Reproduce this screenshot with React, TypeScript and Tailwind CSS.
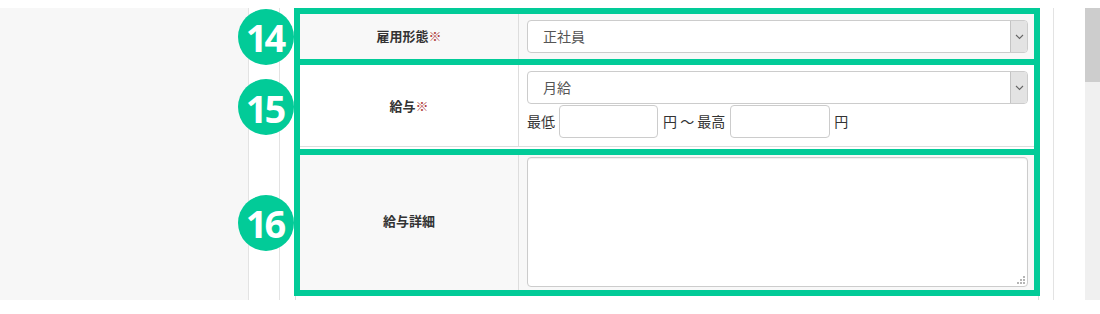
import React from "react";

const jp = { fontFamily: '"Noto Sans CJK JP", "Noto Sans", sans-serif' };

function Badge({ n }: { n: string }) {
  return (
    <div className="absolute left-[-62px] top-1/2 -translate-y-1/2 w-[56px] h-[56px] rounded-full bg-[#02cb98] flex items-center justify-center">
      <span
        className="text-white font-bold text-[38px] leading-none tracking-[-3px] pr-[3px] pt-[1px]"
        style={{ fontFamily: '"Noto Sans", sans-serif' }}
      >
        {n}
      </span>
    </div>
  );
}

function Select({ value }: { value: string }) {
  return (
    <div className="flex h-[33px] w-[501px] rounded-[4px] border border-[#cccccc] bg-white overflow-hidden">
      <div className="flex-1 flex items-center pl-[15px] text-[14px] text-[#555]">{value}</div>
      <div className="w-[17px] bg-[#e3e3e3] border-l border-[#c4c4c4] flex items-center justify-center">
        <svg width="9" height="6" viewBox="0 0 9 6">
          <path d="M1 1 L4.5 4.5 L8 1" fill="none" stroke="#666" strokeWidth="1.1" />
        </svg>
      </div>
    </div>
  );
}

function Label({ text, req }: { text: string; req?: boolean }) {
  return (
    <p className="text-[13px] font-bold text-[#333]">
      {text}
      {req && <span className="text-[#b0413e] font-normal">※</span>}
    </p>
  );
}

export default function App() {
  return (
    <div className="w-[1100px] h-[314px] bg-white" style={jp}>
      <div className="h-[8px]" />
      <div className="flex h-[292px]">
        <div className="w-[249px] bg-[#f7f7f7] border-r border-[#e3e3e3]" />
        <div className="w-[31px] border-r border-[#e3e3e3]" />
        <div className="w-[774px] pl-[14px] pr-[13px] border-r border-[#e3e3e3]">
          {/* 14 */}
          <div className="relative border-[6px] border-[#02cb98] flex h-[57px] bg-[#f8f8f8]">
            <Badge n="14" />
            <div className="w-[219px] border-r border-[#dddddd] flex items-center justify-center pb-[1px]">
              <Label text="雇用形態" req />
            </div>
            <div className="flex-1 pl-[8px] pt-[6px]">
              <Select value="正社員" />
            </div>
          </div>
          {/* 15 */}
          <div className="relative -mt-[6px] border-[6px] border-[#02cb98] h-[96px] bg-white">
            <Badge n="15" />
            <div className="flex h-[82px] border-b border-[#dddddd]">
              <div className="w-[219px] border-r border-[#dddddd] flex items-center justify-center">
                <Label text="給与" req />
              </div>
              <div className="flex-1 pl-[8px] pt-[6px]">
                <Select value="月給" />
                <div className="flex items-center text-[14px] text-[#333] mt-[1px]">
                  <span>最低</span>
                  <div className="ml-[4px] w-[99px] h-[33px] rounded-[4px] border border-[#cccccc] bg-white" />
                  <span className="ml-[5px]">円 ～ 最高</span>
                  <div className="ml-[5px] w-[100px] h-[33px] rounded-[4px] border border-[#cccccc] bg-white" />
                  <span className="ml-[4px]">円</span>
                </div>
              </div>
            </div>
          </div>
          {/* 16 */}
          <div className="relative -mt-[6px] border-[6px] border-[#02cb98] flex h-[147px] bg-[#f8f8f8]">
            <Badge n="16" />
            <div className="w-[219px] border-r border-[#dddddd] flex items-center justify-center pb-[4px]">
              <Label text="給与詳細" />
            </div>
            <div className="flex-1 pl-[8px] pt-[2px]">
              <div className="relative w-[501px] h-[130px] rounded-[4px] border border-[#cccccc] bg-white shadow-[inset_0_1px_1px_rgba(0,0,0,0.06)]">
                <svg className="absolute right-[2px] bottom-[2px]" width="8" height="8" viewBox="0 0 8 8">
                  <rect x="6" y="0" width="2" height="2" fill="#b5b5b5" />
                  <rect x="3" y="3" width="2" height="2" fill="#b5b5b5" />
                  <rect x="6" y="3" width="2" height="2" fill="#b5b5b5" />
                  <rect x="0" y="6" width="2" height="2" fill="#b5b5b5" />
                  <rect x="3" y="6" width="2" height="2" fill="#b5b5b5" />
                  <rect x="6" y="6" width="2" height="2" fill="#b5b5b5" />
                </svg>
              </div>
            </div>
          </div>
          <div className="h-[4px] mx-[1px] border-x border-[#dddddd]" />
        </div>
        <div className="w-[31px]" />
        <div className="w-[15px] bg-[#f0f0f0]">
          <div className="h-[74px] bg-[#cdcdcd]" />
        </div>
      </div>
    </div>
  );
}
